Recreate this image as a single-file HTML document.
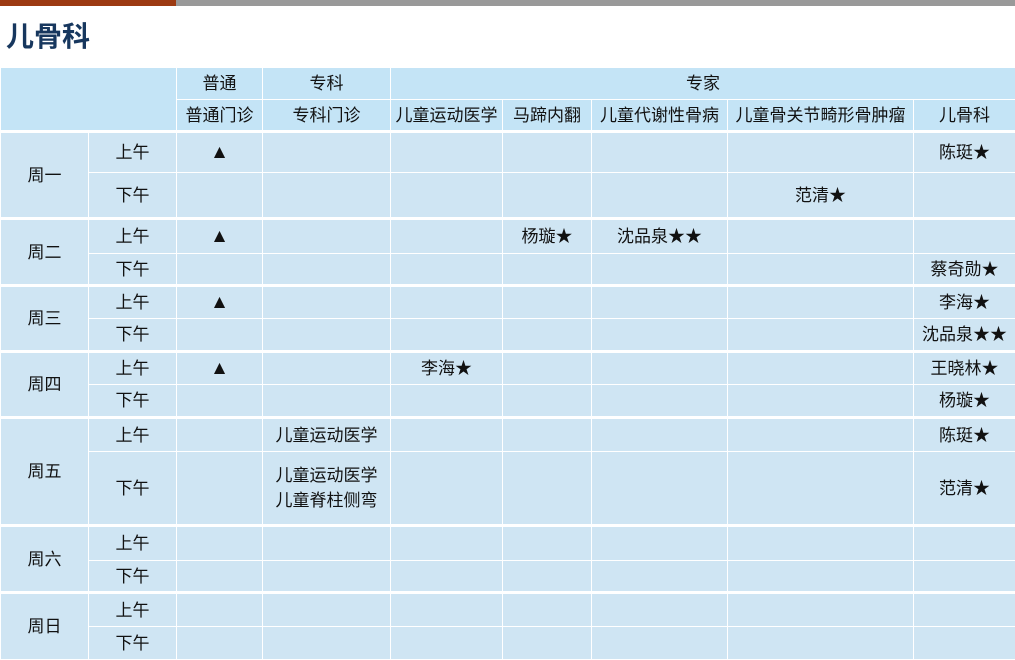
<!DOCTYPE html>
<html><head><meta charset="utf-8"><style>
body{margin:0;width:1015px;height:659px;overflow:hidden;background:#fff;font-family:"Liberation Sans","Noto Sans CJK SC",sans-serif;}
.bar{position:absolute;top:0;height:6px;}
h1{position:absolute;left:6px;top:19px;margin:0;font-size:28px;font-weight:bold;color:#17375e;line-height:36px}
table{position:absolute;left:0;top:67px;border-collapse:collapse;table-layout:fixed;width:1015px;font-size:17px;color:#111}
td{border:1px solid #fff;text-align:center;padding:0;background:#cfe5f3;line-height:25px}
tr.h td{background:#c4e4f6}
tr.g td{border-top:3px solid #fff}
.t{font-size:19px}
</style></head><body>
<div class="bar" style="left:0;width:176px;background:#9c3a12"></div>
<div class="bar" style="left:176px;width:839px;background:#999"></div>
<h1>儿骨科</h1>
<table>
<colgroup><col style="width:88px"><col style="width:88px"><col style="width:86px"><col style="width:128px"><col style="width:112px"><col style="width:89px"><col style="width:136px"><col style="width:186px"><col style="width:102px"></colgroup>
<tr class="h" style="height:32px"><td colspan="2" rowspan="2"></td><td>普通</td><td>专科</td><td colspan="5">专家</td></tr>
<tr class="h" style="height:32px"><td>普通门诊</td><td>专科门诊</td><td>儿童运动医学</td><td>马蹄内翻</td><td>儿童代谢性骨病</td><td>儿童骨关节畸形骨肿瘤</td><td>儿骨科</td></tr>
<tr class="g" style="height:41px"><td rowspan="2">周一</td><td>上午</td><td class="t">▲</td><td></td><td></td><td></td><td></td><td></td><td>陈珽★</td></tr>
<tr style="height:46px"><td>下午</td><td></td><td></td><td></td><td></td><td></td><td>范清★</td><td></td></tr>
<tr class="g" style="height:35px"><td rowspan="2">周二</td><td>上午</td><td class="t">▲</td><td></td><td></td><td>杨璇★</td><td>沈品泉★★</td><td></td><td></td></tr>
<tr style="height:32px"><td>下午</td><td></td><td></td><td></td><td></td><td></td><td></td><td>蔡奇勋★</td></tr>
<tr class="g" style="height:33px"><td rowspan="2">周三</td><td>上午</td><td class="t">▲</td><td></td><td></td><td></td><td></td><td></td><td>李海★</td></tr>
<tr style="height:33px"><td>下午</td><td></td><td></td><td></td><td></td><td></td><td></td><td>沈品泉★★</td></tr>
<tr class="g" style="height:33px"><td rowspan="2">周四</td><td>上午</td><td class="t">▲</td><td></td><td>李海★</td><td></td><td></td><td></td><td>王晓林★</td></tr>
<tr style="height:33px"><td>下午</td><td></td><td></td><td></td><td></td><td></td><td></td><td>杨璇★</td></tr>
<tr class="g" style="height:34px"><td rowspan="2">周五</td><td>上午</td><td></td><td>儿童运动医学</td><td></td><td></td><td></td><td></td><td>陈珽★</td></tr>
<tr style="height:74px"><td>下午</td><td></td><td>儿童运动医学<br>儿童脊柱侧弯</td><td></td><td></td><td></td><td></td><td>范清★</td></tr>
<tr class="g" style="height:35px"><td rowspan="2">周六</td><td>上午</td><td></td><td></td><td></td><td></td><td></td><td></td><td></td></tr>
<tr style="height:32px"><td>下午</td><td></td><td></td><td></td><td></td><td></td><td></td><td></td></tr>
<tr class="g" style="height:34px"><td rowspan="2">周日</td><td>上午</td><td></td><td></td><td></td><td></td><td></td><td></td><td></td></tr>
<tr style="height:33px"><td>下午</td><td></td><td></td><td></td><td></td><td></td><td></td><td></td></tr>
</table>
</body></html>
